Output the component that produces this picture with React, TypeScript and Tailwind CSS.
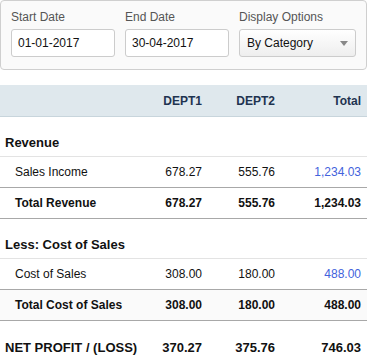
import React from 'react'

const cols = 'grid grid-cols-[135px_73px_73px_86px]'

type Row = { label: string; d1: string; d2: string; total: string }

function HeadingRow({ label }: { label: string }) {
  return (
    <div className={`${cols} h-[40px] items-end border-b border-[#e3e3e3] pb-[4px]`}>
      <div className="pl-[5px] text-[13px] font-bold leading-[18px] whitespace-nowrap">{label}</div>
    </div>
  )
}

function DetailRow({ row }: { row: Row }) {
  return (
    <div className={`${cols} h-[31px] items-center border-b border-[#a8a8a8] text-[12px] leading-[18px]`}>
      <div className="pl-[15px]">{row.label}</div>
      <div className="pr-[6px] text-right">{row.d1}</div>
      <div className="pr-[6px] text-right">{row.d2}</div>
      <div className="pr-[6px] text-right text-[#4262dc]">{row.total}</div>
    </div>
  )
}

function TotalRow({ row, shaded }: { row: Row; shaded?: boolean }) {
  return (
    <div
      className={`${cols} h-[31px] items-center border-b border-[#a8a8a8] text-[12px] font-bold leading-[18px] ${
        shaded ? 'bg-[#fafafa]' : 'bg-white'
      }`}
    >
      <div className="pl-[15px]">{row.label}</div>
      <div className="pr-[6px] text-right">{row.d1}</div>
      <div className="pr-[6px] text-right">{row.d2}</div>
      <div className="pr-[6px] text-right">{row.total}</div>
    </div>
  )
}

export default function App() {
  return (
    <div className="w-[367px] h-[362px] overflow-hidden bg-white text-[#111] font-['Liberation_Sans',Arial,sans-serif]">
      {/* filters */}
      <div className="h-[70px] rounded-[4px] border border-[#cfcfcf] bg-[#fafafa] px-[10px] pt-[7px]">
        <div className="grid grid-cols-[104px_104px_1fr] gap-x-[10px]">
          {['Start Date', 'End Date', 'Display Options'].map((l) => (
            <div key={l} className="text-[12px] leading-[18px] text-[#555]">
              {l}
            </div>
          ))}
          <div className="mt-[3px] h-[28px] rounded-[3px] border border-[#ccc] bg-white pl-[6px] text-[12px] leading-[26px] text-[#111]">
            01-01-2017
          </div>
          <div className="mt-[3px] h-[28px] rounded-[3px] border border-[#ccc] bg-white pl-[6px] text-[12px] leading-[26px] text-[#111]">
            30-04-2017
          </div>
          <div className="mt-[3px] flex h-[28px] items-center justify-between rounded-[3px] border border-[#ccc] bg-gradient-to-b from-white to-[#eeeeee] pl-[7px] pr-[7px] text-[12px] text-[#111]">
            <span>By Category</span>
            <svg width="8" height="5" viewBox="0 0 8 5">
              <path d="M0 0h8L4 5z" fill="#888" />
            </svg>
          </div>
        </div>
      </div>

      {/* table */}
      <div className="mt-[15px]">
        <div className={`${cols} h-[32px] items-center border-b border-[#c8d5dc] bg-[#dfe8ed] text-[12px] font-bold text-[#1e3350]`}>
          <div />
          <div className="pr-[6px] text-right">DEPT1</div>
          <div className="pr-[6px] text-right">DEPT2</div>
          <div className="pr-[6px] text-right">Total</div>
        </div>

        <HeadingRow label="Revenue" />
        <DetailRow row={{ label: 'Sales Income', d1: '678.27', d2: '555.76', total: '1,234.03' }} />
        <TotalRow row={{ label: 'Total Revenue', d1: '678.27', d2: '555.76', total: '1,234.03' }} />

        <HeadingRow label="Less: Cost of Sales" />
        <DetailRow row={{ label: 'Cost of Sales', d1: '308.00', d2: '180.00', total: '488.00' }} />
        <TotalRow shaded row={{ label: 'Total Cost of Sales', d1: '308.00', d2: '180.00', total: '488.00' }} />

        <div className={`${cols} pt-[18px] text-[13px] font-bold leading-[18px]`}>
          <div className="pl-[5px] whitespace-nowrap">NET PROFIT / (LOSS)</div>
          <div className="pr-[6px] text-right">370.27</div>
          <div className="pr-[6px] text-right">375.76</div>
          <div className="pr-[6px] text-right">746.03</div>
        </div>
      </div>
    </div>
  )
}
